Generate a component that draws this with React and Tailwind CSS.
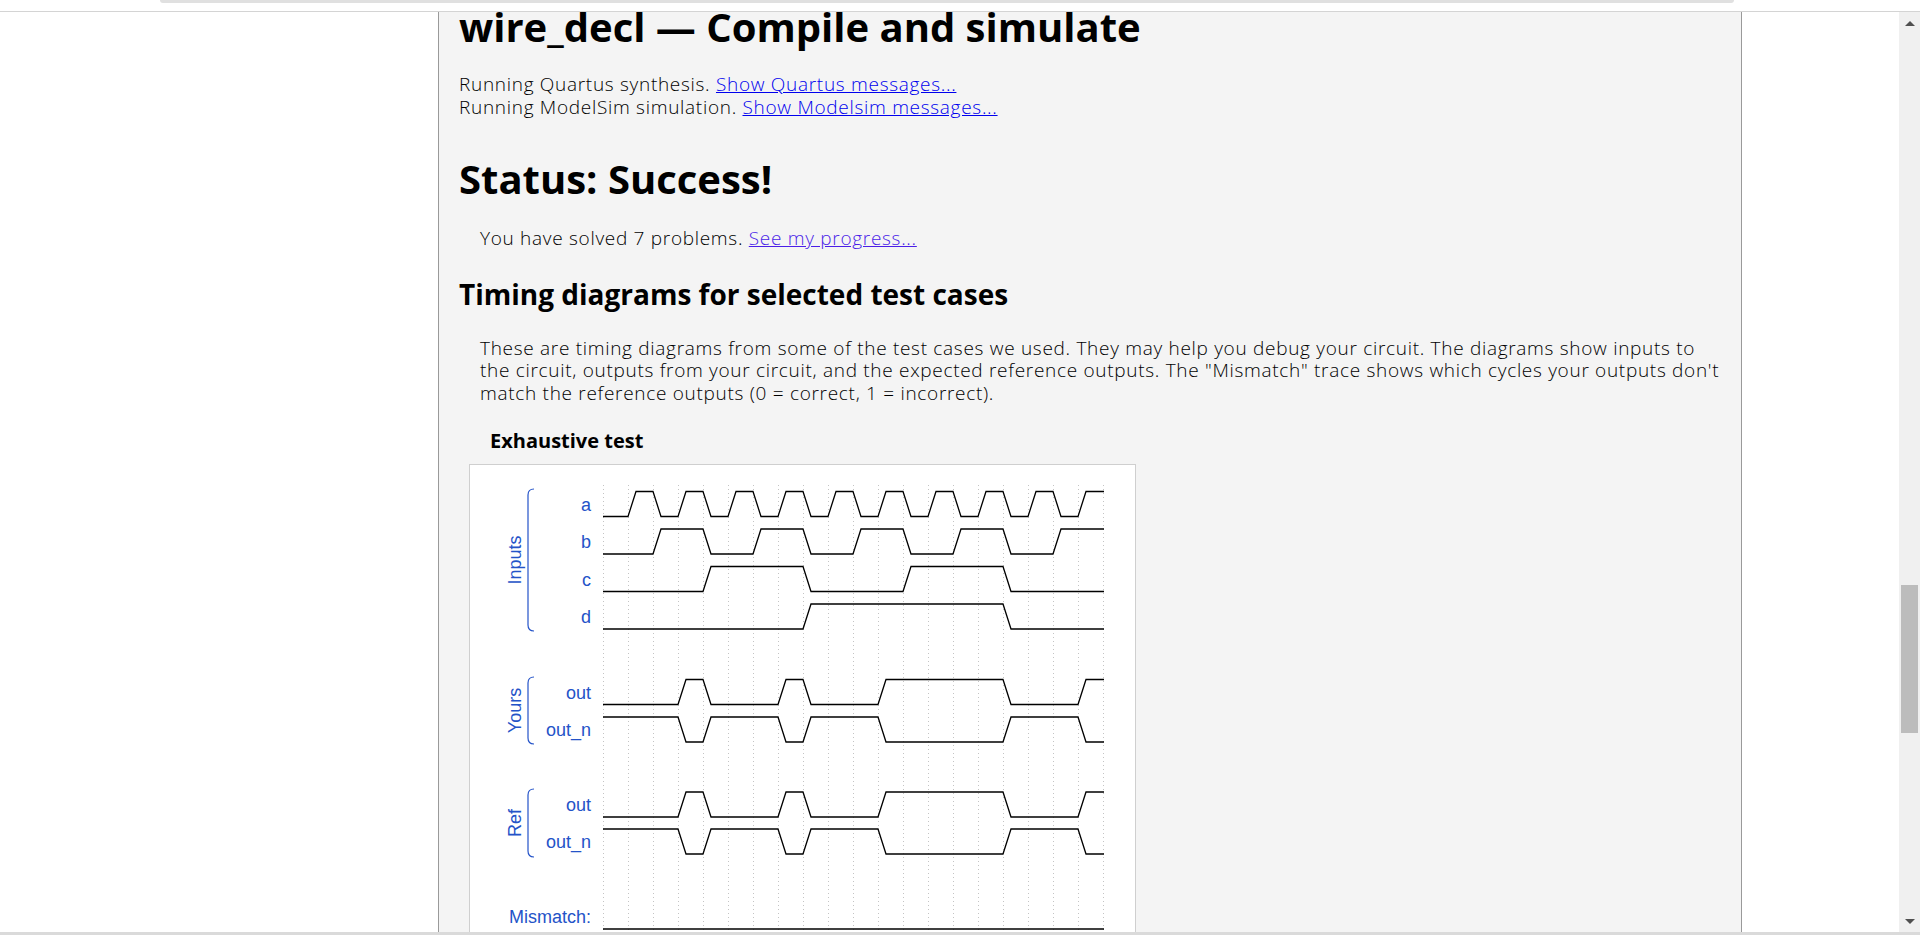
import React from "react"

const BLUE = "#2453c8"
const X0 = 133
const STEP = 25
const SLOPE = 8

const bits = Array.from({ length: 20 }, (_, i) => i % 16)
const A = bits.map((n) => n & 1)
const B = bits.map((n) => (n >> 1) & 1)
const C = bits.map((n) => (n >> 2) & 1)
const D = bits.map((n) => (n >> 3) & 1)
const OUT = bits.map((_, i) => (A[i] & B[i]) | (C[i] & D[i]))
const OUT_N = OUT.map((v) => 1 - v)
const ZERO = bits.map(() => 0)

const rows = [
  { label: "a", hi: 26.5, lo: 51.5, vals: A },
  { label: "b", hi: 64, lo: 89, vals: B },
  { label: "c", hi: 101.5, lo: 126.5, vals: C },
  { label: "d", hi: 139, lo: 164, vals: D },
  { label: "out", hi: 214.5, lo: 239.5, vals: OUT },
  { label: "out_n", hi: 252, lo: 277, vals: OUT_N },
  { label: "out", hi: 327, lo: 352, vals: OUT },
  { label: "out_n", hi: 364, lo: 389, vals: OUT_N },
  { label: "Mismatch:", hi: 439, lo: 464, vals: ZERO },
]

const groups = [
  { label: "Inputs", top: 24, bottom: 166 },
  { label: "Yours", top: 212, bottom: 279 },
  { label: "Ref", top: 324, bottom: 392 },
]

function wavePath(vals, hi, lo) {
  const y = (v) => (v ? hi : lo)
  let d = `M${X0},${y(vals[0])}`
  for (let i = 1; i < vals.length; i++) {
    if (vals[i] !== vals[i - 1]) {
      const x = X0 + STEP * i
      d += ` L${x},${y(vals[i - 1])} L${x + SLOPE},${y(vals[i])}`
    }
  }
  d += ` L${X0 + STEP * vals.length + 1},${y(vals[vals.length - 1])}`
  return d
}

function TimingDiagram() {
  return (
    <svg width="665" height="500" className="block" style={{ fontFamily: '"Liberation Sans", Arial, sans-serif' }}>
      {Array.from({ length: 21 }, (_, k) => (
        <line
          key={k}
          x1={X0 + STEP * k + 0.5}
          x2={X0 + STEP * k + 0.5}
          y1="20"
          y2="500"
          stroke="#c4c4c4"
          strokeDasharray="1 3"
        />
      ))}
      {groups.map((g) => {
        const mid = (g.top + g.bottom) / 2
        return (
          <g key={g.label}>
            <path
              d={`M64,${g.top} Q58,${g.top} 58,${g.top + 6} L58,${g.bottom - 6} Q58,${g.bottom} 64,${g.bottom}`}
              fill="none"
              stroke={BLUE}
              strokeWidth="1.2"
            />
            <text
              transform={`translate(51,${mid}) rotate(-90)`}
              textAnchor="middle"
              fontSize="18"
              fill={BLUE}
            >
              {g.label}
            </text>
          </g>
        )
      })}
      {rows.map((r, i) => (
        <g key={i}>
          <text x="121" y={(r.hi + r.lo) / 2 + 6.5} textAnchor="end" fontSize="18" fill={BLUE}>
            {r.label}
          </text>
          <path d={wavePath(r.vals, r.hi, r.lo)} fill="none" stroke="#000" strokeWidth="1.3" />
        </g>
      ))}
    </svg>
  )
}

function Scrollbar() {
  return (
    <div className="w-[21px] shrink-0 bg-[#f0f0f0] flex flex-col items-center pt-[9px] pb-[8px]">
      <svg width="10" height="5" className="block">
        <path d="M0,5 L5,0 L10,5 Z" fill="#505050" />
      </svg>
      <div className="mt-[559px] h-[148px] w-[17px] bg-[#bcbcbc]" />
      <div className="flex-1" />
      <svg width="10" height="5" className="block">
        <path d="M0,0 L10,0 L5,5 Z" fill="#505050" />
      </svg>
    </div>
  )
}

export default function App() {
  const body = { fontFamily: '"Open Sans", Lato, sans-serif' }
  return (
    <div className="h-[935px] w-[1920px] overflow-hidden bg-white flex flex-col">
      <div className="h-[12px] shrink-0 border-b border-[#d4d4d4]">
        <div className="ml-[160px] h-[3px] w-[1574px] bg-[#e0e0e0] rounded-b-[6px]" />
      </div>
      <div className="flex flex-1 min-h-0">
        <div className="w-[438px] shrink-0" />
        <main
          className="w-[1304px] shrink-0 bg-[#f4f4f4] border-x border-[#9a9a9a] px-[20px] overflow-hidden text-black"
          style={body}
        >
          <h1 className="text-[40px] leading-[30px] font-bold">
            wire_decl — Compile and simulate
          </h1>
          <div className="mt-[30.5px] text-[19px] leading-[23.5px] font-light tracking-[0.7px]">
            <div>
              Running Quartus synthesis. <a href="#" className="underline text-[#0000ee]">Show Quartus messages...</a>
            </div>
            <div>
              Running ModelSim simulation. <a href="#" className="underline text-[#0000ee]">Show Modelsim messages...</a>
            </div>
          </div>
          <h2 className="mt-[39px] text-[40px] leading-[40px] font-bold">Status: Success!</h2>
          <p className="ml-[21px] mt-[28.5px] text-[19px] leading-[23.5px] font-light tracking-[0.7px]">
            You have solved 7 problems. <a href="#" className="underline text-[#4a1ee8]">See my progress...</a>
          </p>
          <h3 className="mt-[29px] text-[28px] leading-[28px] font-bold">
            Timing diagrams for selected test cases
          </h3>
          <p className="ml-[21px] mt-[29px] text-[19px] leading-[22.5px] font-light tracking-[0.7px] whitespace-nowrap">
            These are timing diagrams from some of the test cases we used. They may help you debug your circuit. The diagrams show inputs to
            <br />
            the circuit, outputs from your circuit, and the expected reference outputs. The "Mismatch" trace shows which cycles your outputs don't
            <br />
            match the reference outputs (0 = correct, 1 = incorrect).
          </p>
          <div className="ml-[31px] mt-[27px] text-[20px] leading-[20px] font-bold">Exhaustive test</div>
          <div className="ml-[10px] mt-[13px] w-[667px] border border-[#cfcfcf] bg-white">
            <TimingDiagram />
          </div>
        </main>
        <div className="flex-1" />
        <Scrollbar />
      </div>
      <div className="h-[3px] shrink-0 bg-[#dadada]" />
    </div>
  )
}
